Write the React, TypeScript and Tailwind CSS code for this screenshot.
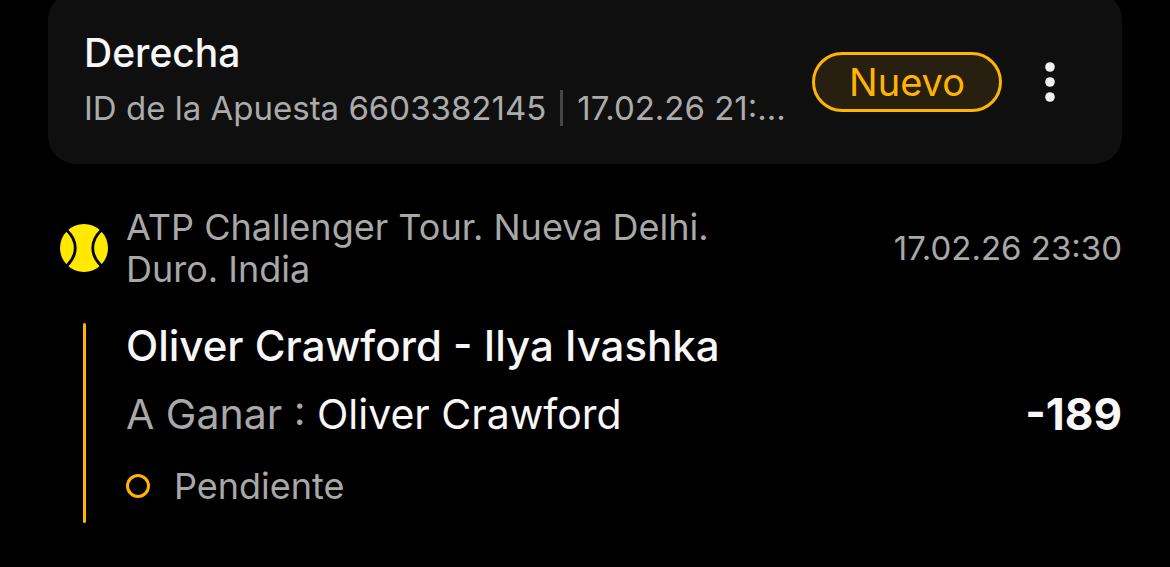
type Selection = {
  tournament: string;
  startsAt: string;
  match: string;
  market: string;
  pick: string;
  odds: string;
  status: string;
};

const selection: Selection = {
  tournament: 'ATP Challenger Tour. Nueva Delhi. Duro. India',
  startsAt: '17.02.26 23:30',
  match: 'Oliver Crawford - Ilya Ivashka',
  market: 'A Ganar :',
  pick: 'Oliver Crawford',
  odds: '-189',
  status: 'Pendiente',
};

function TennisBall() {
  return (
    <svg viewBox="0 0 48 48" className="size-12 shrink-0" aria-hidden="true">
      <circle cx="24" cy="24" r="24" fill="#ffe900" />
      <path
        d="M7 6.5C18 17 18 31 7 41.5M41 6.5C30 17 30 31 41 41.5"
        fill="none"
        stroke="#000"
        strokeWidth="2.8"
        strokeLinecap="square"
      />
    </svg>
  );
}

function BetHeader() {
  return (
    <header className="-mt-2 flex items-center gap-6 rounded-[28px] bg-[#0f0f0f] pt-9 pr-12 pb-7 pl-9">
      <div className="flex min-w-0 flex-1 flex-col gap-0.5 whitespace-nowrap">
        <h1 className="text-[39px] leading-[50px] font-medium text-[#f7f7f7]">Derecha</h1>
        <div className="flex items-center text-[33px] leading-[56px] text-[#ababab]">
          <span>ID de la Apuesta 6603382145</span>
          <span className="mx-3.5 h-9 w-[3px] bg-[#454545]" />
          <span>17.02.26 21:...</span>
        </div>
      </div>
      <button className="h-[60px] shrink-0 rounded-full border-3 border-[#ffb400] bg-[#271f0f] px-[34px] text-[38px] leading-none text-[#ffb400]">
        Nuevo
      </button>
      <button aria-label="Más opciones" className="flex size-12 shrink-0 items-center justify-center">
        <svg viewBox="0 0 12 40" className="h-10 w-3" fill="#f2f2f2">
          <circle cx="6" cy="5" r="4.8" />
          <circle cx="6" cy="20" r="4.8" />
          <circle cx="6" cy="35" r="4.8" />
        </svg>
      </button>
    </header>
  );
}

function BetSelection({ item }: { item: Selection }) {
  return (
    <section className="mt-[42px]">
      <div className="flex items-center gap-[18px] pl-3 text-[#a8a8a8]">
        <TennisBall />
        <p className="max-w-[640px] flex-1 text-[36px] leading-[42px]">{item.tournament}</p>
        <time className="ml-auto shrink-0 text-[33px] leading-[42px]">{item.startsAt}</time>
      </div>

      <div className="mt-[33px] flex gap-10 pl-[35px]">
        <div className="w-[3px] shrink-0 rounded-full bg-[#ffb400]" />
        <div className="flex flex-1 flex-col gap-5 pb-3.5">
          <h2 className="text-[42px] leading-[46px] font-medium text-[#f7f7f7]">{item.match}</h2>
          <div className="flex items-center justify-between leading-[50px]">
            <p className="text-[41px] text-[#f7f7f7]">
              <span className="text-[#a8a8a8]">{item.market}</span> {item.pick}
            </p>
            <strong className="text-[44px] font-bold text-[#f7f7f7]">{item.odds}</strong>
          </div>
          <div className="mt-1 flex items-center gap-6 text-[36px] leading-[46px] text-[#a8a8a8]">
            <span className="size-6 rounded-full border-3 border-[#ffb400]" />
            {item.status}
          </div>
        </div>
      </div>
    </section>
  );
}

export default function App() {
  return (
    <main className="flow-root min-h-screen bg-black px-12 font-['Inter',sans-serif]">
      <BetHeader />
      <BetSelection item={selection} />
    </main>
  );
}
